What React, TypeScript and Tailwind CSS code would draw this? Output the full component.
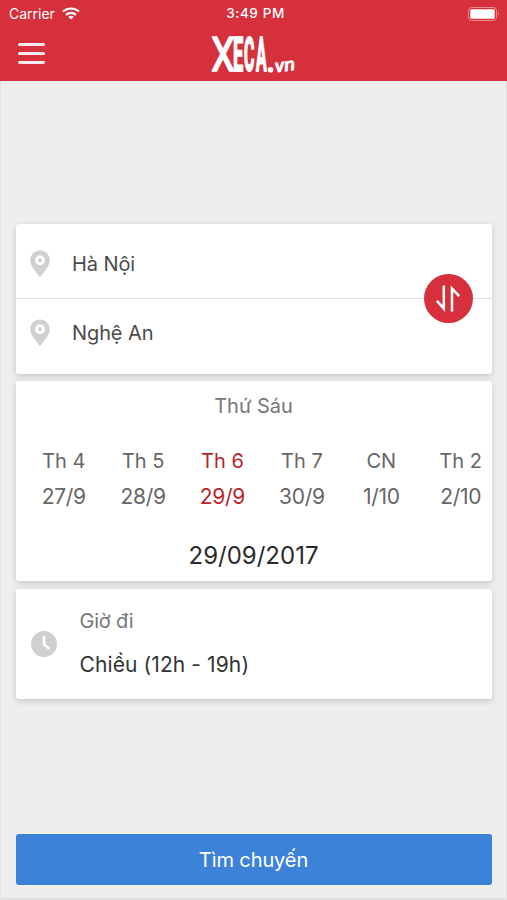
import type { ReactNode } from "react";

const days = [
  { name: "Th 4", date: "27/9" },
  { name: "Th 5", date: "28/9" },
  { name: "Th 6", date: "29/9", active: true },
  { name: "Th 7", date: "30/9" },
  { name: "CN", date: "1/10" },
  { name: "Th 2", date: "2/10" },
];

function Pin() {
  return (
    <svg width="20" height="28" viewBox="0 0 20 28" className="shrink-0">
      <path
        fill="#d0d0d0"
        fillRule="evenodd"
        d="M10 0.5C4.6 0.5 0.3 4.8 0.3 10.2C0.3 16.5 6 21.5 10 27.3C14 21.5 19.7 16.5 19.7 10.2C19.7 4.8 15.4 0.5 10 0.5ZM10 5.3A4.9 4.9 0 1 0 10 15.1A4.9 4.9 0 1 0 10 5.3Z"
      />
      <circle cx="10" cy="10.2" r="2" fill="#d0d0d0" />
    </svg>
  );
}

function Wifi() {
  return (
    <svg width="18" height="13" viewBox="0 0 18 13" fill="none" stroke="#fff" strokeWidth="2.1">
      <path d="M1 4.6C5.5 0.4 12.5 0.4 17 4.6" />
      <path d="M4 7.9C6.8 5.2 11.2 5.2 14 7.9" />
      <path d="M9 12.6L6.3 9.9C7.8 8.5 10.2 8.5 11.7 9.9Z" fill="#fff" stroke="none" />
    </svg>
  );
}

const logoLetters = [
  { char: "X", transform: "translate(2.2 37) scale(0.78 1)", weight: 400 },
  { char: "E", transform: "translate(24 37) scale(0.38 1)", weight: 700 },
  { char: "C", transform: "translate(35 37) scale(0.33 1)", weight: 700 },
  { char: "A", transform: "translate(47.1 37) scale(0.33 1)", weight: 700 },
];

function Logo() {
  return (
    <svg
      width="90"
      height="40"
      viewBox="0 0 90 40"
      fill="#fff"
      stroke="#fff"
      strokeLinejoin="round"
      className="overflow-visible font-['Roboto']"
    >
      {logoLetters.map((l) => (
        <text key={l.char} transform={l.transform} fontSize="48" fontWeight={l.weight} strokeWidth="1.5" style={{ vectorEffect: "non-scaling-stroke" }}>
          {l.char}
        </text>
      ))}
      <circle cx="61.5" cy="35.8" r="2.8" stroke="none" />
      <text transform="translate(66.5 38.5) rotate(-8) scale(1.12 1)" fontSize="18" fontWeight="500" fontStyle="italic" strokeWidth="0.6">vn</text>
    </svg>
  );
}

function Card({ className, children }: { className: string; children: ReactNode }) {
  return <section className={`rounded-[3px] bg-white shadow-[0_2px_6px_rgba(0,0,0,0.17)] ${className}`}>{children}</section>;
}

export default function App() {
  return (
    <main className="flex h-[900px] w-[507px] flex-col bg-[#eeeeee] font-['Inter','Noto_Sans',sans-serif] text-[20px] text-[#4a4a4a] shadow-[inset_1px_-2px_0_#e1e1e1,inset_-1px_0_0_#e1e1e1]">
      <header className="h-[81px] bg-[#d6303c] text-white">
        <div className="grid h-[27px] grid-cols-3 items-center pl-[9px] pr-[7px]">
          <div className="flex items-center gap-[7px] text-[14px] leading-none">
            <span>Carrier</span>
            <Wifi />
          </div>
          <div className="pl-[2px] pt-[1px] text-center text-[13.5px] font-medium leading-none tracking-[0.6px]">3:49 PM</div>
          <svg width="32" height="14" viewBox="0 0 32 14" className="justify-self-end">
            <rect x="0.5" y="0.5" width="28" height="13" rx="3" fill="none" stroke="#e98a91" />
            <rect x="2.3" y="2.3" width="24.4" height="9.4" rx="1.3" fill="#fff" />
            <path d="M30 5V9Q31.6 7 30 5" fill="#f0a8ae" />
          </svg>
        </div>
        <div className="grid h-[54px] grid-cols-3 items-center px-[18px]">
          <div className="-mt-px flex h-[21px] w-[27px] flex-col justify-between">
            <span className="h-[3px] rounded-full bg-white/90" />
            <span className="h-[3px] rounded-full bg-white/90" />
            <span className="h-[3px] rounded-full bg-white/90" />
          </div>
          <div className="flex justify-center">
            <Logo />
          </div>
        </div>
      </header>

      <div className="flex flex-1 flex-col px-[15.5px] pt-[142.5px]">
        <Card className="relative h-[150px]">
          <div className="flex h-[75px] items-center gap-[22px] border-b border-[#dddddd] pl-[14.5px] pt-[6px]">
            <Pin />
            <span className="tracking-[-0.1px]">Hà Nội</span>
          </div>
          <div className="flex h-[68px] items-center gap-[22px] pl-[14.5px]">
            <Pin />
            <span className="tracking-[-0.1px]">Nghệ An</span>
          </div>
          <button className="absolute right-[19px] top-[50.5px] flex size-[49px] items-center justify-center rounded-full bg-[#d6303c]">
            <svg width="24" height="27" viewBox="0 0 24 27" fill="none" stroke="#fff" strokeWidth="2.5">
              <path d="M7.8 0.5V23.6L0.9 15.8" />
              <path d="M16 26.5V3.4L23.1 11.2" />
            </svg>
          </button>
        </Card>

        <Card className="mt-[7px] h-[200.5px] overflow-hidden">
          <div className="pt-[11px] text-center leading-[28px] text-[#777777]">Thứ Sáu</div>
          <div className="ml-[8.5px] mt-[24px] flex w-[477px]">
            {days.map((d) => (
              <div
                key={d.name}
                className={`w-[79.4px] shrink-0 text-center leading-[35px] ${d.active ? "text-[#b91f2b]" : "text-[#666666]"}`}
              >
                <div>{d.name}</div>
                <div className="text-[21px] tracking-[-0.3px]">{d.date}</div>
              </div>
            ))}
          </div>
          <div className="mt-[26px] text-center text-[24px] leading-[32px] text-[#2b2b2b]">29/09/2017</div>
        </Card>

        <Card className="mt-[7.5px] flex h-[110px] items-center gap-[23px] pl-[15px]">
          <svg width="26" height="26" viewBox="0 0 26 26" className="shrink-0">
            <circle cx="13" cy="13" r="13" fill="#d0d0d0" />
            <path d="M13 5V13.5L18.5 18" fill="none" stroke="#fff" strokeWidth="2.4" />
          </svg>
          <div className="-mt-[1px] leading-[44px]">
            <div className="tracking-[-0.2px] text-[#777777]">Giờ đi</div>
            <div className="text-[21px] tracking-[0.1px] text-[#333333]">Chiều (12h - 19h)</div>
          </div>
        </Card>

        <button className="mb-[15px] mt-auto h-[51px] rounded-[3px] bg-[#3d82d9] text-[20px] tracking-[-0.1px] text-white">Tìm chuyến</button>
      </div>
    </main>
  );
}
